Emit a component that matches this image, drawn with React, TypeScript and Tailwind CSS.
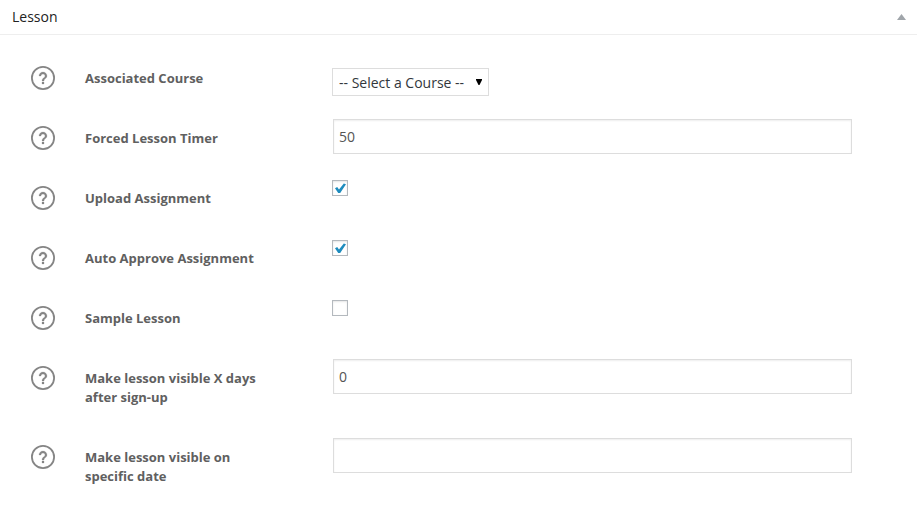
import { useState, type ReactNode } from "react";

function HelpIcon() {
  return (
    <svg viewBox="0 0 24 24" className="block size-6" aria-hidden="true">
      <circle cx="12" cy="12" r="11.1" fill="none" stroke="#858585" strokeWidth="1.8" />
      <path
        fill="#858585"
        stroke="#858585"
        strokeWidth="0.25"
        d="M11 18h2v-2h-2v2zm1-12c-2.21 0-4 1.79-4 4h2c0-1.1.9-2 2-2s2 .9 2 2c0 2-3 1.75-3 5h2c0-2.25 3-2.5 3-5 0-2.21-1.79-4-4-4z"
      />
    </svg>
  );
}

function Row({ id, label, children }: { id: string; label: string; children: ReactNode }) {
  return (
    <div className="flex items-start">
      <button type="button" aria-label={`Help: ${label}`} className="mt-[7px] mr-[30px] shrink-0 rounded-full">
        <HelpIcon />
      </button>
      <div className="w-[247px] shrink-0 pt-[10px] pr-16 pb-[31px]">
        <label htmlFor={id} className="block text-[13px] leading-[19px] font-bold text-[#606060]">
          {label}
        </label>
      </div>
      <div className="min-w-0 flex-1">{children}</div>
    </div>
  );
}

function TextField({ id, initial }: { id: string; initial: string }) {
  const [value, setValue] = useState(initial);
  return (
    <div className="pl-px">
      <input
        id={id}
        type="text"
        value={value}
        onChange={(e) => setValue(e.target.value)}
        className="block h-[35px] w-full border border-[#dddddd] bg-white px-[5px] text-sm text-[#555555] shadow-[inset_0_1px_2px_rgba(0,0,0,0.07)] outline-none"
      />
    </div>
  );
}

function CheckField({ id, initial }: { id: string; initial: boolean }) {
  const [checked, setChecked] = useState(initial);
  return (
    <div className="grid pt-px">
      <input
        id={id}
        type="checkbox"
        checked={checked}
        onChange={(e) => setChecked(e.target.checked)}
        className="col-start-1 row-start-1 size-4 appearance-none border border-[#b4b9be] bg-white shadow-[inset_0_1px_2px_rgba(0,0,0,0.1)]"
      />
      {checked && (
        <svg viewBox="0 0 16 16" className="pointer-events-none col-start-1 row-start-1 size-4" aria-hidden="true">
          <path fill="#1e8cbe" d="M3 8.2L5.2 7l1.8 2.4L11.8 3.4l2.2 .9L8.2 13H6.2z" />
        </svg>
      )}
    </div>
  );
}

export default function App() {
  return (
    <section className="min-h-screen bg-white font-['Open_Sans',sans-serif]">
      <header className="flex h-[35px] items-center justify-between border-b border-[#eeeeee] pr-[11px] pl-3">
        <h2 className="text-sm leading-5 font-medium text-[#222222]">Lesson</h2>
        <button type="button" aria-label="Toggle panel">
          <svg viewBox="0 0 9 6" className="block h-[6px] w-[9px]" aria-hidden="true">
            <path d="M4.5 0L9 6H0z" fill="#a0a5aa" />
          </svg>
        </button>
      </header>
      <form className="pt-6 pr-[65px] pl-[31px]">
        <Row id="course" label="Associated Course">
          <div className="grid w-[157px] items-center pt-[9px]">
            <select
              id="course"
              className="col-start-1 row-start-1 h-7 w-full appearance-none border border-[#dddddd] bg-white pt-[2px] pl-[6px] text-sm text-[#32373c] outline-none"
            >
              <option>-- Select a Course --</option>
            </select>
            <svg
              viewBox="0 0 6 6"
              className="pointer-events-none col-start-1 row-start-1 mr-[7px] size-[6px] justify-self-end"
              aria-hidden="true"
            >
              <path d="M0 0h6v1L3.5 6h-1L0 1z" fill="#000000" />
            </svg>
          </div>
        </Row>
        <Row id="timer" label="Forced Lesson Timer">
          <TextField id="timer" initial="50" />
        </Row>
        <Row id="upload" label="Upload Assignment">
          <CheckField id="upload" initial={true} />
        </Row>
        <Row id="approve" label="Auto Approve Assignment">
          <CheckField id="approve" initial={true} />
        </Row>
        <Row id="sample" label="Sample Lesson">
          <CheckField id="sample" initial={false} />
        </Row>
        <Row id="visible-after" label="Make lesson visible X days after sign-up">
          <TextField id="visible-after" initial="0" />
        </Row>
        <Row id="visible-on" label="Make lesson visible on specific date">
          <TextField id="visible-on" initial="" />
        </Row>
      </form>
    </section>
  );
}
